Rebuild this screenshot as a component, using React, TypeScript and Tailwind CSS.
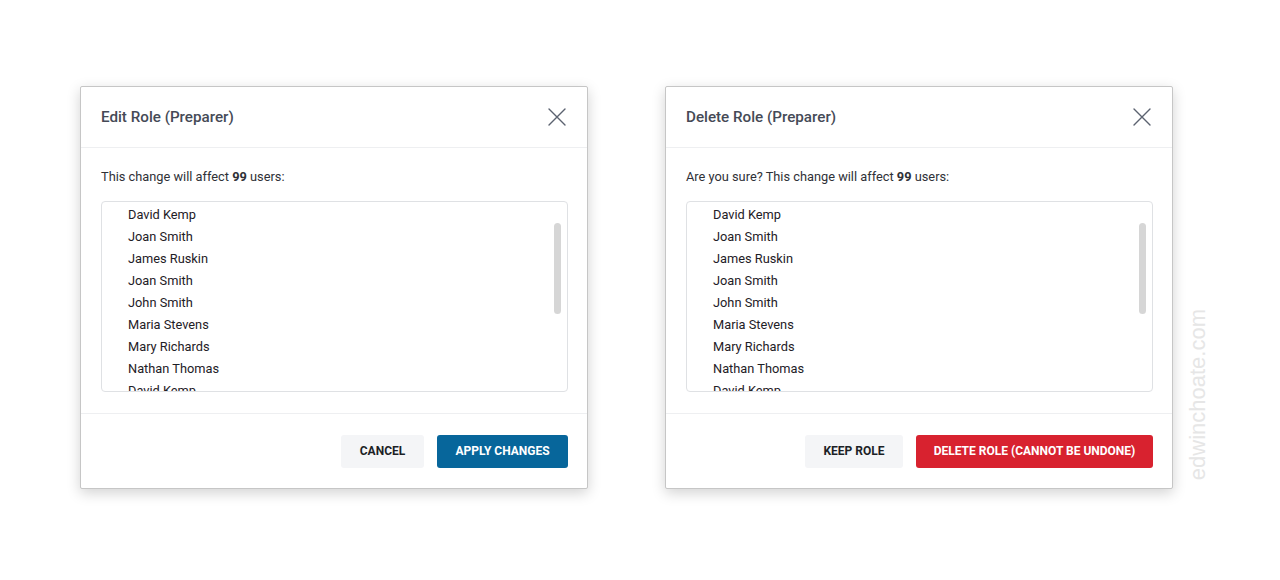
const users = [
  "David Kemp",
  "Joan Smith",
  "James Ruskin",
  "Joan Smith",
  "John Smith",
  "Maria Stevens",
  "Mary Richards",
  "Nathan Thomas",
  "David Kemp",
  "Joan Smith",
];

const CloseIcon = () => (
  <svg width="18" height="18" viewBox="0 0 18 18" fill="none">
    <path d="M1 1 L17 17 M17 1 L1 17" stroke="#5b6270" strokeWidth="1.4" strokeLinecap="round" />
  </svg>
);

const RoleDialog = ({
  title,
  message,
  secondary,
  primary,
  primaryClass,
  primaryWidth,
  secondaryWidth,
}: {
  title: string;
  message: string;
  secondary: string;
  primary: string;
  primaryClass: string;
  primaryWidth: string;
  secondaryWidth: string;
}) => {
  return (
    <div className="w-[508px] h-[403px] bg-white border border-[#c6c6c6] rounded-[2px] shadow-[0_4px_14px_rgba(0,0,0,0.18)] flex flex-col">
      <div className="h-[61px] flex items-center justify-between pl-[20px] pr-[21px] border-b border-[#eeeff1]">
        <h2 className="text-[15.2px] font-medium text-[#454a56]">{title}</h2>
        <CloseIcon />
      </div>
      <div className="flex-1 pl-[20px] pr-[19px] pt-[20px]">
        <p className="text-[12.8px] leading-[18px] text-[#2f3137]">
          {message} <span className="font-bold">99</span> users:
        </p>
        <div className="relative mt-[15px] h-[191px] border border-[#dfe1e4] rounded-[4px] overflow-hidden">
          <ul className="pl-[26px] pt-[2px]">
            {users.map((name, i) => (
              <li key={i} className="text-[12.8px] leading-[22px] text-[#1e2026]">
                {name}
              </li>
            ))}
          </ul>
          <div className="absolute right-[6px] top-[21px] w-[7px] h-[91px] rounded-full bg-[#d6d6d6]" />
        </div>
      </div>
      <div className="h-[75px] border-t border-[#eeeff1] flex items-center justify-end gap-[13px] pl-[20px] pr-[19px]">
        <button className={`${secondaryWidth} h-[33px] rounded-[3px] bg-[#f4f5f7] text-[12px] font-bold text-[#1c1f26]`}>
          {secondary}
        </button>
        <button className={`${primaryWidth} h-[33px] rounded-[3px] text-[12px] font-bold text-white ${primaryClass}`}>
          {primary}
        </button>
      </div>
    </div>
  );
};

export default function App() {
  return (
    <div
      className="w-[1280px] h-[580px] bg-white flex items-start pl-[80px] pt-[86px]"
      style={{ fontFamily: "Roboto, 'Liberation Sans', sans-serif" }}
    >
      <RoleDialog
        title="Edit Role (Preparer)"
        message="This change will affect"
        secondary="CANCEL"
        primary="APPLY CHANGES"
        primaryClass="bg-[#07669b]"
        secondaryWidth="w-[83px]"
        primaryWidth="w-[131px]"
      />
      <div className="ml-[77px]">
        <RoleDialog
          title="Delete Role (Preparer)"
          message="Are you sure? This change will affect"
          secondary="KEEP ROLE"
          primary="DELETE ROLE (CANNOT BE UNDONE)"
          primaryClass="bg-[#d8222f]"
          secondaryWidth="w-[98px]"
          primaryWidth="w-[237px]"
        />
      </div>
      <div
        className="ml-[14px] mt-[223px] text-[22px] leading-[22px] text-[#e6e6e6] [writing-mode:vertical-rl] rotate-180"
        style={{ fontFamily: "'Liberation Sans', Arial, sans-serif" }}
      >
        edwinchoate.com
      </div>
    </div>
  );
}
